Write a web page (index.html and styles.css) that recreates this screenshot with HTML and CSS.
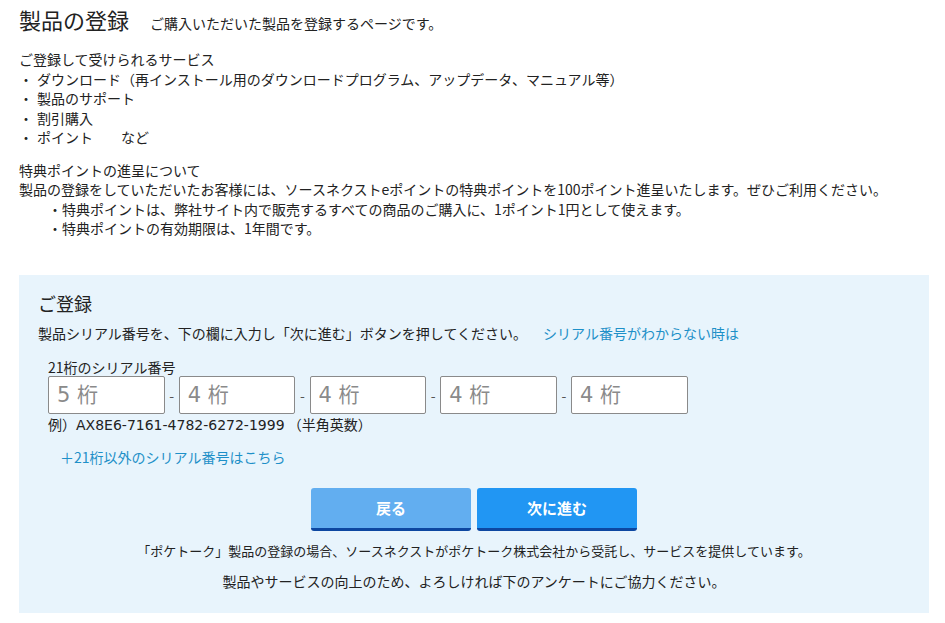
FILE: index.html
```
<!DOCTYPE html>
<html lang="ja">
<head>
<meta charset="utf-8">
<link rel="stylesheet" href="styles.css">
</head>
<body>
<div class="page">
  <div class="title-row">
    <h1 class="title">製品の登録</h1>
    <span class="subtitle">ご購入いただいた製品を登録するページです。</span>
  </div>

  <div class="services">
    <p class="line">ご登録して受けられるサービス</p>
    <p class="line"><span class="dot">・</span>ダウンロード（再インストール用のダウンロードプログラム、アップデータ、マニュアル等）</p>
    <p class="line"><span class="dot">・</span>製品のサポート</p>
    <p class="line"><span class="dot">・</span>割引購入</p>
    <p class="line"><span class="dot">・</span>ポイント　　など</p>
  </div>

  <div class="points">
    <p class="line">特典ポイントの進呈について</p>
    <p class="line">製品の登録をしていただいたお客様には、ソースネクストeポイントの特典ポイントを100ポイント進呈いたします。ぜひご利用ください。</p>
    <p class="line indent">・特典ポイントは、弊社サイト内で販売するすべての商品のご購入に、1ポイント1円として使えます。</p>
    <p class="line indent">・特典ポイントの有効期限は、1年間です。</p>
  </div>

  <div class="box">
    <h2 class="box-title">ご登録</h2>
    <p class="instr">製品シリアル番号を、下の欄に入力し「次に進む」ボタンを押してください。<a class="link help" href="#">シリアル番号がわからない時は</a></p>
    <div class="serial">
      <div class="serial-label">21桁のシリアル番号</div>
      <div class="inputs">
        <input class="field" type="text" placeholder="5 桁">
        <span class="dash">-</span>
        <input class="field" type="text" placeholder="4 桁">
        <span class="dash">-</span>
        <input class="field" type="text" placeholder="4 桁">
        <span class="dash">-</span>
        <input class="field" type="text" placeholder="4 桁">
        <span class="dash">-</span>
        <input class="field" type="text" placeholder="4 桁">
      </div>
      <div class="example">例）<span class="latin">AX8E6-7161-4782-6272-1999</span> （半角英数）</div>
    </div>
    <a class="link other" href="#">＋21桁以外のシリアル番号はこちら</a>
    <div class="buttons">
      <button class="btn back">戻る</button>
      <button class="btn next">次に進む</button>
    </div>
    <p class="note">「ポケトーク」製品の登録の場合、ソースネクストがポケトーク株式会社から受託し、サービスを提供しています。</p>
    <p class="note note2">製品やサービスの向上のため、よろしければ下のアンケートにご協力ください。</p>
  </div>
</div>
</body>
</html>
```

FILE: styles.css
```
* { box-sizing: border-box; }
html, body { margin: 0; padding: 0; background: #fff; }
body {
  font-family: "Noto Sans CJK JP", "Noto Sans", sans-serif;
  color: #222;
  font-size: 14px;
}
p { margin: 0; }
.page { padding: 4px 16px 0 19px; width: 945px; }
.title-row { display: flex; align-items: baseline; gap: 21px; height: 30px; }
.title { font-size: 22px; font-weight: normal; margin: 0; line-height: 30px; }
.subtitle { font-size: 14px; line-height: 30px; }
.line { line-height: 19.5px; white-space: nowrap; }
.dot { margin-right: 4px; }
.services { margin-top: 16px; }
.points { margin-top: 13px; }
.indent { padding-left: 29px; }
.box {
  margin-top: 36px;
  width: 910px;
  background: #e8f4fc;
  padding: 14px 19px 22px 19px;
}
.box-title { font-size: 18px; font-weight: normal; margin: 0; line-height: 28px; }
.instr { margin-top: 4px; line-height: 24px; }
.link { color: #1e90c8; text-decoration: none; }
.help { margin-left: 16px; }
.serial { padding-left: 10px; margin-top: 13px; }
.serial-label { line-height: 18px; }
.inputs { display: flex; align-items: center; height: 38px; }
.field {
  width: 116.5px;
  height: 38px;
  border: 1px solid #8a8a8a;
  border-radius: 2px;
  background: #fff;
  padding: 0 8px;
  font-family: "DejaVu Sans", "Noto Sans CJK JP", sans-serif;
  font-size: 21px;
  color: #333;
  outline: none;
}
.field::placeholder { color: #8a8a8a; }
.dash { width: 14.25px; text-align: center; font-size: 14px; color: #555; }
.example { line-height: 20px; }
.latin { font-family: "DejaVu Sans", sans-serif; font-size: 14px; }
.other { display: block; margin-left: 22px; margin-top: 11px; line-height: 22px; }
.buttons { display: flex; justify-content: center; gap: 6px; margin-top: 20px; }
.btn {
  width: 160px;
  height: 43px;
  border: none;
  border-bottom: 3px solid #0d47a1;
  border-radius: 3px;
  color: #fff;
  font-family: "Noto Sans CJK JP", sans-serif;
  font-size: 15px;
  font-weight: bold;
  padding: 0;
}
.back { background: #62aef0; }
.next { background: #2196f3; }
.note { text-align: center; line-height: 20px; margin-top: 10px; font-size: 13px; }
.note2 { margin-top: 10px; font-size: 14px; }
```
